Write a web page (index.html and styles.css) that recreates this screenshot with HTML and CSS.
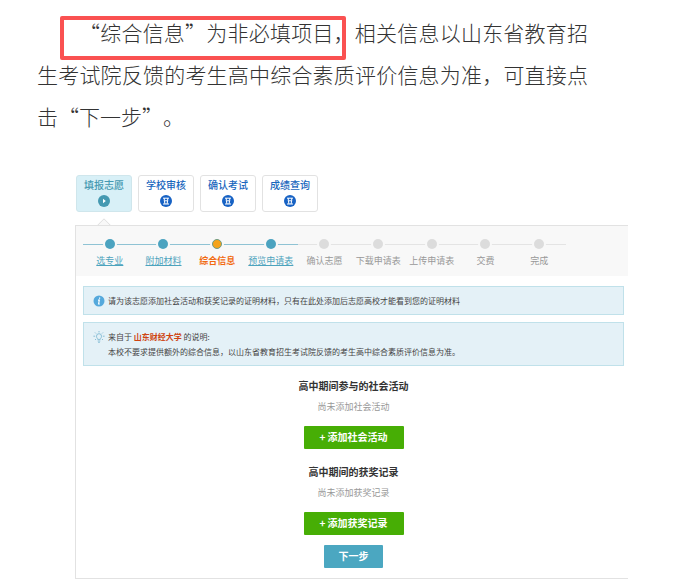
FILE: index.html
```html
<!DOCTYPE html>
<html lang="zh-CN">
<head>
  <meta charset="UTF-8" />
  <title>综合信息</title>
  <link rel="stylesheet" href="styles.css">
</head>
<body>
  <div class="intro">
    <p>“综合信息”为非必填项目，相关信息以山东省教育招生考试院反馈的考生高中综合素质评价信息为准，可直接点击“下一步”。</p>
    <div class="highlight"></div>
  </div>

  <main class="app">
    <nav class="tabs">
      <a class="tab active" href="#apply">填报志愿
        <svg viewBox="0 0 12 12"><circle cx="6" cy="6" r="6" /><path d="M5 3.8 7.8 6 5 8.2z" /></svg>
      </a>
      <a class="tab" href="#review">学校审核
        <svg viewBox="0 0 12 12"><circle cx="6" cy="6" r="6" /><path class="glass" d="M3 3.2h6M3 9h6M4.3 3.2v2.6L5 9M7.7 3.2v2.6L7 9M4.3 5.8h3.4" /></svg>
      </a>
      <a class="tab" href="#exam">确认考试
        <svg viewBox="0 0 12 12"><circle cx="6" cy="6" r="6" /><path class="glass" d="M3 3.2h6M3 9h6M4.3 3.2v2.6L5 9M7.7 3.2v2.6L7 9M4.3 5.8h3.4" /></svg>
      </a>
      <a class="tab" href="#score">成绩查询
        <svg viewBox="0 0 12 12"><circle cx="6" cy="6" r="6" /><path class="glass" d="M3 3.2h6M3 9h6M4.3 3.2v2.6L5 9M7.7 3.2v2.6L7 9M4.3 5.8h3.4" /></svg>
      </a>
    </nav>

    <section class="panel">
      <div class="steps-bar">
        <ol class="steps">
          <li class="done"><a href="#major">选专业</a></li>
          <li class="done"><a href="#material">附加材料</a></li>
          <li class="done current">综合信息</li>
          <li class="done"><a href="#preview">预览申请表</a></li>
          <li>确认志愿</li>
          <li>下载申请表</li>
          <li>上传申请表</li>
          <li>交费</li>
          <li>完成</li>
        </ol>
      </div>

      <div class="content">
        <div class="notice">
          <svg class="info-icon" viewBox="0 0 12 12"><circle cx="6" cy="6" r="5.5" fill="#55a9dc" /><path d="M6.6 2.6v1.2M5 5.2h1.3L5.6 9h1.2" fill="none" stroke="#fff" stroke-width="1.2" /></svg>
          <p>请为该志愿添加社会活动和获奖记录的证明材料，只有在此处添加后志愿高校才能看到您的证明材料</p>
        </div>

        <div class="notice">
          <svg class="info-icon" viewBox="0 0 12 12" fill="none" stroke="#7fb9d3" stroke-width="0.9"><path d="M4.7 8.4C4.7 7.4 3.5 7 3.5 5.2a2.5 2.5 0 0 1 5 0C8.5 7 7.3 7.4 7.3 8.4zM4.7 10h2.6M5.2 11.4h1.6M6 0v1.4M.4 5.2h1.7M9.9 5.2h1.7M2 1.5l1 1M10 1.5l-1 1M2 9l1-1M10 9 9 8" /></svg>
          <p>来自于 <strong>山东财经大学</strong> 的说明:<br>本校不要求提供额外的综合信息，以山东省教育招生考试院反馈的考生高中综合素质评价信息为准。</p>
        </div>

        <div class="record">
          <h2>高中期间参与的社会活动</h2>
          <p>尚未添加社会活动</p>
          <button class="add" type="button">+ 添加社会活动</button>
        </div>
        <div class="record">
          <h2>高中期间的获奖记录</h2>
          <p>尚未添加获奖记录</p>
          <button class="add" type="button">+ 添加获奖记录</button>
        </div>
        <button class="next" type="button">下一步</button>
      </div>
    </section>
  </main>
</body>
</html>
```

FILE: styles.css
```css
*,
*::before,
*::after {
  box-sizing: border-box;
}

body {
  margin: 0;
  background-color: #fff;
  color: #444;
  font-family: "Noto Sans CJK SC", sans-serif;
  font-size: 8px;
}

h2, p, ol {
  margin: 0;
  padding: 0;
}

.intro {
  position: relative;
  padding: 11px 105px 0 37px;
}

.intro p {
  color: #333;
  font-size: 21px;
  font-weight: 300;
  line-height: 42px;
  text-indent: 2em;
  text-align: justify;
  text-spacing-trim: space-all;
}

/* red marker frame drawn over the text */
.highlight {
  position: absolute;
  top: 16px;
  left: 60px;
  width: 286px;
  height: 44px;
  border: 4px solid #fa5151;
  border-radius: 2px;
}

.app {
  margin: 38px 65px 0 75px;
}

.tabs {
  display: flex;
  gap: 6px;
  padding-left: 1px;
}

.tab {
  position: relative;
  display: flex;
  flex-direction: column;
  align-items: center;
  gap: 3px;
  width: 56px;
  height: 37px;
  padding-top: 1px;
  border: 1px solid #e2e2e2;
  border-radius: 3px;
  color: #1866bd;
  font-size: 10px;
  font-weight: 500;
  line-height: 15px;
  text-decoration: none;
}

.tab svg {
  width: 12px;
  height: 12px;
  fill: #1762c4;
}

.tab path {
  fill: #fff;
}

.tab .glass {
  fill: none;
  stroke: #fff;
}

.tab.active {
  border-color: #cfe6ec;
  background-color: #d8f0f7;
  color: #4599b1;
}

.tab.active svg {
  fill: #4599b1;
}

/* pointer on top of the panel */
.tab.active::after {
  content: "";
  position: absolute;
  z-index: 1;
  top: 44px;
  left: 22px;
  width: 10px;
  height: 10px;
  border: 1px solid #ddd;
  background-color: #f8f8f8;
  clip-path: polygon(0 0, 100% 0, 0 100%);
  transform: rotate(45deg);
}

.panel {
  margin-top: 13px;
  border: 1px solid #e2e2e2;
  border-right: 0;
}

.steps-bar {
  padding: 11px 62px 7px 7px;
  background-color: #f8f8f8;
}

.steps {
  display: grid;
  grid-template-columns: repeat(9, 1fr);
  list-style: none;
}

.steps li {
  position: relative;
  padding-top: 16px;
  color: #999;
  font-size: 9px;
  line-height: 16px;
  text-align: center;
  white-space: nowrap;
}

.steps li::before {
  content: "";
  position: absolute;
  top: 7px;
  left: 0;
  width: 100%;
  height: 1px;
  background-color: #e4e4e4;
}

.steps li::after {
  content: "";
  position: absolute;
  top: 2px;
  left: calc(50% - 5px);
  width: 10px;
  height: 10px;
  border-radius: 50%;
  background-color: #dcdcdc;
  box-shadow: 0 0 0 2px #f8f8f8;
}

.steps .done::before {
  background-color: #8fc3d4;
}

.steps .done::after {
  background-color: #4ca3c0;
}

.steps a {
  color: #4ca3bd;
}

.steps .current {
  color: #f26a10;
  font-weight: 700;
}

.steps .current::after {
  border: 1px solid #6d9c86;
  background-color: #f5a31a;
}

.content {
  display: flex;
  flex-direction: column;
  align-items: center;
  padding: 10px 4px 10px 7px;
}

.notice {
  display: flex;
  gap: 3px;
  width: 100%;
  margin-bottom: 7px;
  padding: 6px 9px;
  border: 1px solid #c0e1ea;
  background-color: #e4f1f7;
  color: #444;
  line-height: 15px;
}

.info-icon {
  flex: none;
  width: 12px;
  height: 12px;
  margin-top: 2px;
}

.notice strong {
  color: #cf4412;
}

.record {
  display: flex;
  flex-direction: column;
  align-items: center;
  margin: 5px 0 10px;
}

.record h2 {
  color: #333;
  font-size: 10px;
  line-height: 16px;
}

.record p {
  margin: 5px 0 11px;
  color: #999;
  font-size: 9px;
  line-height: 16px;
}

button {
  height: 23px;
  padding: 0 0 2px;
  border: 0;
  border-radius: 1px;
  color: #fff;
  font-family: inherit;
  font-size: 10px;
  font-weight: 700;
  cursor: pointer;
}

.add {
  width: 100px;
  background-color: #47ae05;
}

.next {
  width: 59px;
  background-color: #4ba7c1;
}
```
